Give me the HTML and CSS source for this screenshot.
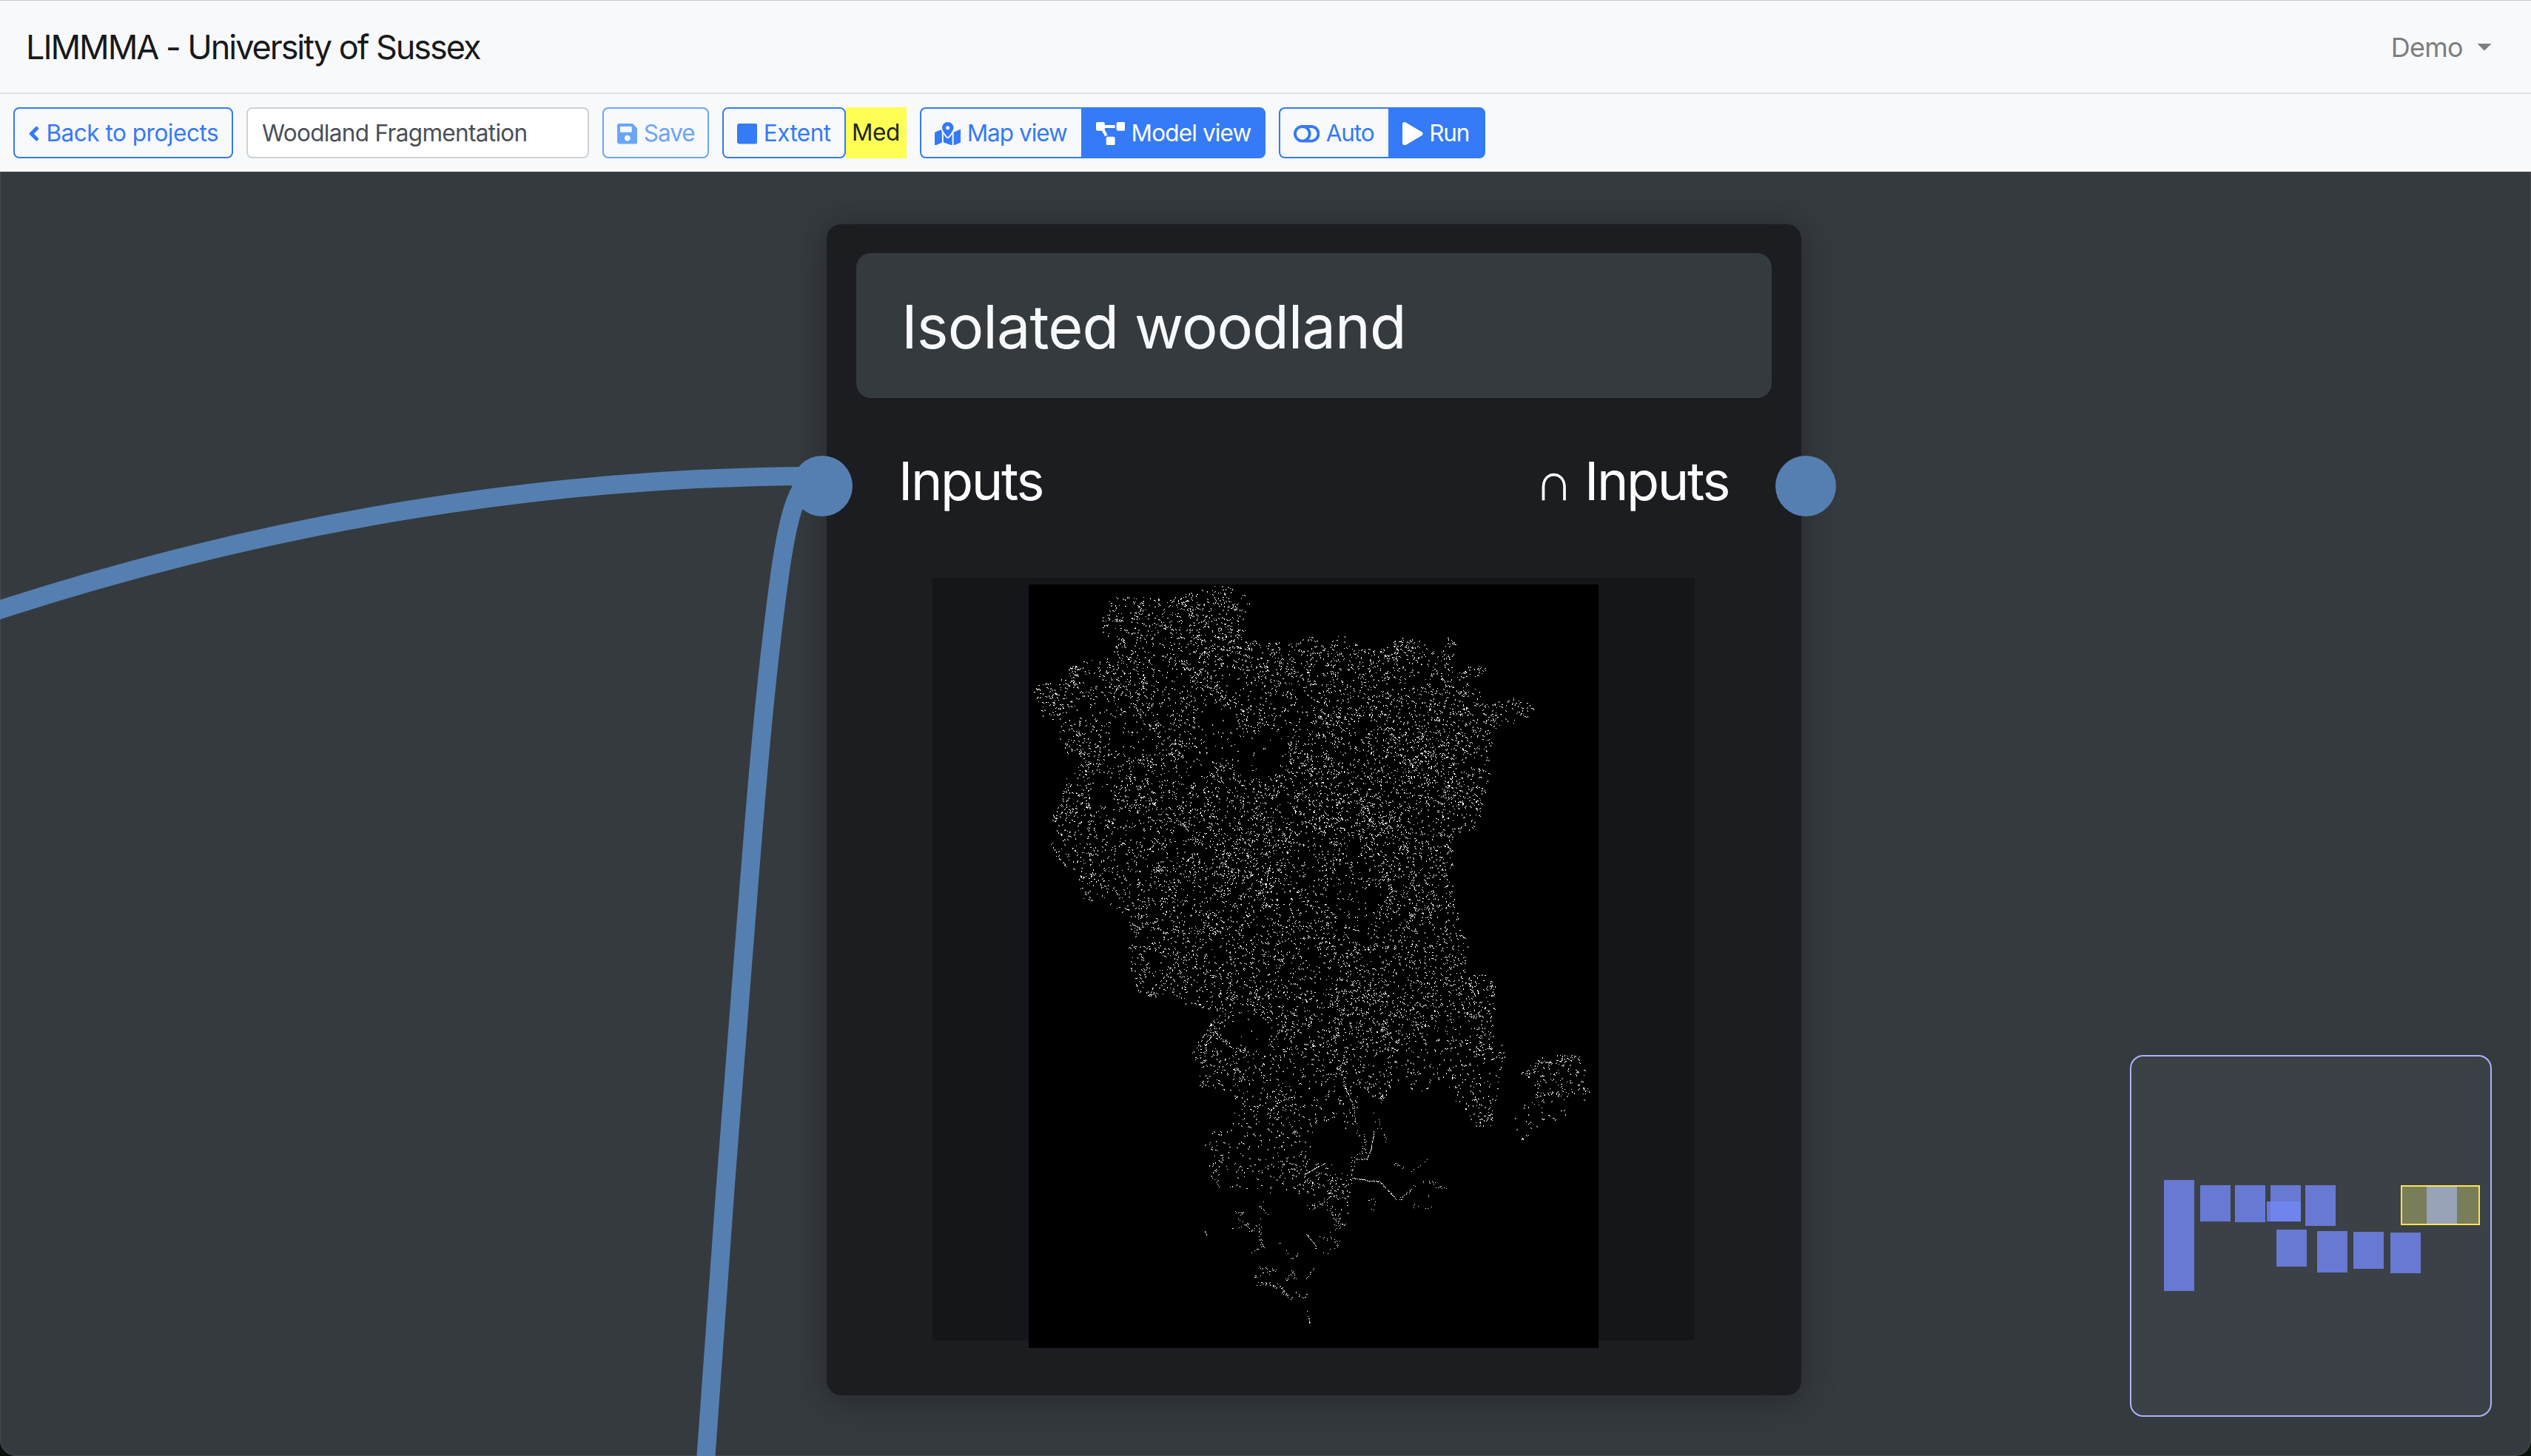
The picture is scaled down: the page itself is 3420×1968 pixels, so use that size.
FILE: index.html
```html
<!DOCTYPE html>
<html lang="en">
<head>
<meta charset="utf-8">
<title>LIMMMA - University of Sussex</title>
<link rel="stylesheet" href="styles.css">
</head>
<body>
<div class="app">
  <header class="navbar">
    <div class="brand">LIMMMA - University of Sussex</div>
    <div class="user-menu"><span>Demo</span><i class="caret"></i></div>
  </header>

  <div class="toolbar">
    <button class="btn btn-back">
      <svg class="icon" viewBox="0 0 256 512"><path d="M31.7 239l136-136c9.4-9.4 24.6-9.4 33.9 0l22.6 22.6c9.4 9.4 9.4 24.6 0 33.9L127.9 256l96.4 96.4c9.4 9.4 9.4 24.6 0 33.9L201.7 409c-9.4 9.4-24.6 9.4-33.9 0l-136-136c-9.5-9.4-9.5-24.6-.1-34z"/></svg>
      <span>Back to projects</span>
    </button>
    <div class="project-name">Woodland Fragmentation</div>
    <button class="btn btn-save">
      <svg class="icon" viewBox="0 0 448 512"><path d="M433.941 129.941l-83.882-83.882A48 48 0 0 0 316.118 32H48C21.49 32 0 53.49 0 80v352c0 26.51 21.49 48 48 48h352c26.51 0 48-21.49 48-48V163.882a48 48 0 0 0-14.059-33.941zM224 416c-35.346 0-64-28.654-64-64 0-35.346 28.654-64 64-64s64 28.654 64 64c0 35.346-28.654 64-64 64zm96-304.52V212c0 6.627-5.373 12-12 12H76c-6.627 0-12-5.373-12-12V108c0-6.627 5.373-12 12-12h228.52c3.183 0 6.235 1.264 8.485 3.515l3.48 3.48A11.996 11.996 0 0 1 320 111.48z"/></svg>
      <span>Save</span>
    </button>
    <div class="group">
      <button class="btn btn-extent">
        <svg class="icon" viewBox="0 0 448 512"><path d="M400 32H48C21.5 32 0 53.500 0 80v352c0 26.500 21.500 48 48 48h352c26.500 0 48-21.500 48-48V80c0-26.500-21.500-48-48-48z"/></svg>
        <span>Extent</span>
      </button>
      <div class="badge-med">Med</div>
    </div>
    <div class="group">
      <button class="btn btn-map first">
        <svg class="icon" viewBox="0 0 576 512"><path d="M288 0c-69.59 0-126 56.41-126 126 0 56.26 82.35 158.8 113.9 196.02 6.39 7.54 17.82 7.54 24.2 0C331.65 284.8 414 182.26 414 126 414 56.41 357.59 0 288 0zm0 168c-23.2 0-42-18.8-42-42s18.8-42 42-42 42 18.8 42 42-18.8 42-42 42zM20.12 215.95A32.006 32.006 0 0 0 0 245.66v250.32c0 11.32 11.43 19.06 21.94 14.86L160 448V214.92c-8.84-15.98-16.07-31.54-21.25-46.42L20.12 215.95zM288 359.67c-14.07 0-27.38-6.18-36.51-16.96-19.66-23.2-40.57-49.62-59.49-76.72v182l192 64V266c-18.92 27.09-39.82 53.52-59.49 76.72-9.13 10.77-22.44 16.95-36.51 16.95zm266.06-198.51L416 224v288l139.88-55.95A31.996 31.996 0 0 0 576 426.34V176.02c0-11.32-11.43-19.06-21.94-14.86z"/></svg>
        <span>Map view</span>
      </button>
      <button class="btn btn-model solid last">
        <svg class="icon" viewBox="0 0 640 512"><path d="M384 320H256c-17.67 0-32 14.33-32 32v128c0 17.67 14.33 32 32 32h128c17.67 0 32-14.33 32-32V352c0-17.67-14.33-32-32-32zM192 32c0-17.67-14.33-32-32-32H32C14.33 0 0 14.33 0 32v128c0 17.67 14.33 32 32 32h95.72l73.16 128.04C211.98 300.98 232.4 288 256 288h.28L192 175.51V128h224V64H192V32zM608 0H480c-17.67 0-32 14.33-32 32v128c0 17.67 14.33 32 32 32h128c17.67 0 32-14.33 32-32V32c0-17.67-14.33-32-32-32z"/></svg>
        <span>Model view</span>
      </button>
    </div>
    <div class="group">
      <button class="btn btn-auto first">
        <svg class="icon" viewBox="0 0 576 512"><path d="M384 64H192C85.961 64 0 149.961 0 256s85.961 192 192 192h192c106.039 0 192-85.961 192-192S490.039 64 384 64zM64 256c0-70.741 57.249-128 128-128 70.741 0 128 57.249 128 128 0 70.741-57.249 128-128 128-70.741 0-128-57.249-128-128zm320 128h-48.905c65.217-72.858 65.236-183.12 0-256H384c70.741 0 128 57.249 128 128 0 70.74-57.249 128-128 128z"/></svg>
        <span>Auto</span>
      </button>
      <button class="btn btn-run solid last">
        <svg class="icon" viewBox="0 0 448 512"><path d="M424.4 214.7L72.4 6.6C43.8-10.3 0 6.1 0 47.900V464c0 37.500 40.700 60.100 72.400 41.300l352-208c31.400-18.500 31.500-64.100 0-82.600z"/></svg>
        <span>Run</span>
      </button>
    </div>
  </div>

  <main class="workspace">
    <section class="node">
      <div class="node-title">Isolated woodland</div>
      <div class="node-ports">
        <span class="port-label">Inputs</span>
        <span class="port-label">∩ Inputs</span>
      </div>
      <div class="preview"><canvas id="raster" width="770" height="1032"></canvas></div>
    </section>
    <svg class="wires" viewBox="0 0 3420 1736">
      <g transform="translate(0 -232)">
        <path d="M-20 830.500L0 824C367 705 740 643.500 1105 643.500"/>
        <path d="M952 1996L954 1968C969.500 1745 986 1521 1004 1298C1018 1123 1030 949 1054 774C1061 725 1074 643.500 1105 643.500"/>
      </g>
    </svg>
    <i class="socket socket-in"></i>
    <i class="socket socket-out"></i>

    <aside class="minimap">
      <svg viewBox="2878 1426 489 489">
        <g class="mini-node">
          <rect x="2924" y="1595" width="41" height="150"/>
          <rect x="2973" y="1602" width="41" height="49"/>
          <rect x="3020" y="1602" width="41" height="50"/>
          <rect x="3068" y="1602" width="41" height="49"/>
          <rect x="3063" y="1624" width="46" height="27"/>
          <rect x="3115" y="1602" width="41" height="55"/>
          <rect x="3076" y="1662" width="41" height="50"/>
          <rect x="3131" y="1664" width="41" height="56"/>
          <rect x="3180" y="1665" width="41" height="50"/>
          <rect x="3230" y="1666" width="41" height="55"/>
          <rect x="3279" y="1602" width="41" height="53"/>
        </g>
        <rect class="mini-view" x="3245" y="1603" width="105" height="52"/>
      </svg>
    </aside>
  </main>
</div>
<script src="raster.js"></script>
</body>
</html>
```
FILE: styles.css
```css
* { box-sizing: border-box; }

html { background: #0a120c; }

body {
  margin: 0;
  font-family: Inter, "Liberation Sans", sans-serif;
  font-size: 31.5px;
  color: #212529;
}

.app {
  display: flex;
  flex-direction: column;
  height: 1968px;
  overflow: hidden;
}

.navbar {
  display: flex;
  justify-content: space-between;
  align-items: center;
  height: 127px;
  padding: 1px 53px 0 35px;
  background: #f8f9fb;
  border-top: 1px solid #c6c7ca;
  border-bottom: 2px solid #dee0e6;
}

.brand {
  font-size: 45px;
  letter-spacing: -2.03px;
  color: #18191a;
}

.user-menu {
  display: flex;
  align-items: center;
  gap: 19px;
  font-size: 36px;
  letter-spacing: -0.7px;
  color: #7d7e7f;
}

.caret {
  width: 20px;
  height: 10px;
  background: currentColor;
  clip-path: polygon(0 0, 100% 0, 50% 100%);
}

.toolbar {
  display: flex;
  gap: 18px;
  height: 105px;
  padding: 18px;
  background: #f8f9fb;
}

.group { display: flex; }

.btn {
  display: flex;
  align-items: center;
  gap: 8.7px;
  height: 69px;
  padding: 0 0 0 17.5px;
  border: 2px solid #357af6;
  border-radius: 8px;
  background: transparent;
  color: #357af6;
  font: inherit;
  white-space: nowrap;
}

.btn.solid { background: #357af6; color: #fff; }
.btn.first { border-right: 0; border-radius: 8px 0 0 8px; }
.btn.last { border-radius: 0 8px 8px 0; }

.btn-back { width: 297px; padding-left: 18px; letter-spacing: -0.48px; }
.btn-save { width: 144px; letter-spacing: -1px; color: #6ba5f8; border-color: #6ba5f8; }
.btn-extent { width: 167px; letter-spacing: -0.54px; }
.btn-map { width: 218px; letter-spacing: -0.99px; }
.btn-model { width: 249px; letter-spacing: -0.85px; }
.btn-auto { width: 148px; letter-spacing: -1.1px; }
.btn-run { width: 131px; padding-left: 17px; letter-spacing: -1.2px; }

.icon {
  height: 31.5px;
  margin-top: 2px;
  fill: currentColor;
}

.project-name {
  width: 463px;
  height: 69px;
  padding-left: 19px;
  border: 2px solid #ced2d6;
  border-radius: 8px;
  background: #fff;
  color: #495057;
  line-height: 66px;
  letter-spacing: -0.67px;
}

.badge-med {
  width: 82px;
  padding-left: 8px;
  background: #ffff54;
  line-height: 67px;
  letter-spacing: -0.4px;
}

.workspace {
  position: relative;
  flex: 1;
  overflow: hidden;
  background: #353a3e;
  border-radius: 0 0 22px 22px;
  box-shadow: inset 0 0 0 1px #484c50;
}

.node {
  position: absolute;
  left: 1117px;
  top: 71px;
  width: 1317px;
  height: 1583px;
  padding: 39px 40px;
  border-radius: 20px;
  background: #1c1d21;
  box-shadow: 0 5px 45px rgba(20, 20, 28, 0.45);
  color: #fff;
}

.node-title {
  height: 196px;
  padding: 5px 0 0 61px;
  border-radius: 20px;
  background: #353a3e;
  color: #f8f9fb;
  font-size: 81px;
  line-height: 191px;
  letter-spacing: -0.94px;
}

.node-ports {
  display: flex;
  justify-content: space-between;
  margin-top: 78px;
  padding: 0 58px 0 57px;
  font-size: 72px;
  line-height: 67px;
  height: 82px;
  letter-spacing: -2.4px;
}

.preview {
  display: flex;
  justify-content: center;
  width: 1030px;
  height: 1031px;
  margin: 83px auto 0 103px;
  padding-top: 9px;
  background: #15161a;
}

.preview canvas {
  flex: none;
  width: 770px;
  height: 1032px;
  background: #000;
}

.wires {
  position: absolute;
  inset: 0;
  width: 3420px;
  height: 1736px;
}

.wires path {
  fill: none;
  stroke: #557fb0;
  stroke-width: 25px;
}

.socket {
  position: absolute;
  top: 384px;
  width: 82px;
  height: 82px;
  border-radius: 50%;
  background: #557fb0;
}

.socket-in { left: 1070px; }
.socket-out { left: 2399px; }

.minimap {
  position: absolute;
  left: 2878px;
  top: 1194px;
  width: 489px;
  height: 489px;
  border-radius: 18px;
  background: #3b4147;
  box-shadow: inset 0 0 0 2px #afb2fb;
}

.minimap svg { display: block; width: 489px; height: 489px; }
.mini-node rect { fill: rgba(115, 135, 245, 0.8); }

.mini-view {
  fill: rgba(255, 251, 128, 0.32);
  stroke: #ffe54f;
  stroke-width: 2px;
}
```
FILE: raster.js
```javascript
// Sparse woodland raster: single white cells scattered inside the region outline.
const canvas = document.getElementById('raster');
const ctx = canvas.getContext('2d');
const SX = 0.5102, SY = 0.7015, OX = 20, OY = 29;

function path(points) {
  const p = new Path2D();
  points.forEach(([x, y], i) => {
    const px = (x - OX) * SX, py = (y - OY) * SY;
    i ? p.lineTo(px, py) : p.moveTo(px, py);
  });
  p.closePath();
  return p;
}

const mainland = path([[214,55],[300,50],[400,55],[470,38],[500,29],[555,30],[612,60],[590,85],[600,130],[640,140],[700,140],[780,125],[800,150],[850,120],[900,150],[980,150],[985,125],[1060,135],[1110,165],[1135,118],[1155,135],[1150,200],[1190,185],[1245,182],[1240,195],[1185,212],[1215,235],[1225,262],[1300,242],[1362,262],[1350,280],[1280,305],[1250,310],[1240,370],[1235,440],[1200,500],[1150,510],[1140,580],[1155,660],[1185,710],[1175,775],[1225,780],[1262,800],[1245,890],[1290,925],[1265,985],[1255,1070],[1205,1075],[1165,1035],[1100,985],[1060,1010],[990,985],[955,1030],[900,1000],[880,1075],[840,1080],[790,1060],[760,1100],[800,1140],[880,1160],[860,1265],[835,1265],[800,1215],[740,1205],[670,1190],[610,1195],[525,1188],[500,1165],[490,1150],[488,1100],[505,1080],[555,1075],[560,1010],[460,995],[475,970],[452,930],[500,870],[520,850],[450,845],[400,825],[310,822],[285,760],[285,670],[240,645],[160,635],[145,590],[75,545],[80,480],[120,400],[160,370],[100,350],[100,300],[55,285],[25,225],[80,215],[165,170],[220,175],[250,150],[215,130]]);
const island = path([[1320,970],[1360,945],[1415,930],[1478,938],[1522,992],[1500,1030],[1400,1070],[1350,1090],[1310,1103],[1305,1045],[1365,1010]]);

// [x, y, radius x, radius y, density factor]
const zones = [
  [630,355,70,45,0.15],[520,320,60,50,0.25],
  [600,890,60,35,0.1],[440,380,60,30,0.3],[215,440,30,50,0.15],[880,630,70,25,0.4],
  [820,1105,55,40,0.25],[530,1045,30,35,0.1],[280,320,70,35,0.4],[200,270,50,30,0.3],
  [580,1185,120,25,0.5],[1400,1050,90,40,0.5],
  [1085,380,120,110,1.6],[830,470,220,110,1.45],[480,120,200,110,1.25],[930,860,170,80,1.4],
  [150,235,60,25,1.6],[1215,860,45,80,1.5],[590,560,120,90,1.25],[310,630,50,30,1.5],
  [140,480,50,60,1.3],[1020,150,50,25,1.5],[830,1240,40,50,1.5]
];

let seed = 20117;
function rnd() {
  seed = (seed + 0x6D2B79F5) | 0;
  let t = Math.imul(seed ^ (seed >>> 15), 1 | seed);
  t = (t + Math.imul(t ^ (t >>> 7), 61 | t)) ^ t;
  return ((t ^ (t >>> 14)) >>> 0) / 4294967296;
}

// Smooth value noise for patchy clumps
const G = 90, grid = Array.from({ length: G * G }, rnd);
function noise(x, y) {
  const ix = Math.floor(x), iy = Math.floor(y), s = t => t * t * (3 - 2 * t);
  const u = s(x - ix), v = s(y - iy), g = (a, b) => grid[(b % G) * G + (a % G)];
  return (g(ix, iy) * (1 - u) + g(ix + 1, iy) * u) * (1 - v)
       + (g(ix, iy + 1) * (1 - u) + g(ix + 1, iy + 1) * u) * v;
}

ctx.fillStyle = '#fff';
for (let y = 0; y < 1032; y++) {
  for (let x = 0; x < 770; x++) {
    const r = rnd();
    if (r > 0.13) continue;
    const land = ctx.isPointInPath(mainland, x, y), isle = !land && ctx.isPointInPath(island, x, y);
    if (!land && !isle) continue;
    const dx = x / SX + OX, dy = y / SY + OY;
    let p = 0.036;
    if (isle) p = 0.024;
    else if (dy > 930) p = 0.025;
    for (const [cx, cy, rx, ry, f] of zones) {
      const d = ((dx - cx) / rx) ** 2 + ((dy - cy) / ry) ** 2;
      if (d < 1) p *= f < 1 ? f : 1 + (f - 1) * (1 - d * d);
    }
    const n = noise(x / 7, y / 7), m = noise(x / 31 + 40, y / 31 + 40);
    p *= (0.35 + 1.9 * n * n) * (0.65 + 0.7 * m);
    if (r > p) continue;
    ctx.fillRect(x, y, 1, 1);
    const k = rnd();
    if (k < 0.16) ctx.fillRect(x + 1, y, 1, 1);
    else if (k < 0.42) ctx.fillRect(x, y + 1, 1, 1);
    else if (k < 0.54) ctx.fillRect(x + 1, y + 1, 1, 1);
    else if (k < 0.66) ctx.fillRect(x - 1, y + 1, 1, 1);
    if (k < 0.06) ctx.fillRect(x + 2, y + 1, 1, 1);
  }
}

// Wooded corridors along the southern valleys: [polyline, fill rate, spread]
const corridors = [
  [[[820,455],[860,452],[875,520],[895,590],[901,660]], 0.6, 3],
  [[[901,690],[925,710],[922,770],[890,800],[890,860]], 0.6, 8],
  [[[950,685],[943,750],[930,800],[900,800]], 0.8, 2],
  [[[890,875],[930,885],[965,890],[990,930],[1010,960]], 0.8, 2],
  [[[985,970],[1015,970],[1050,930],[1065,895],[1110,890],[1125,915],[1150,916]], 0.5, 5],
  [[[1000,812],[1030,830],[1035,845]], 0.5, 6],
  [[[1050,850],[1095,803]], 0.25, 4],
  [[[925,970],[950,960],[945,1015]], 0.35, 5],
  [[[1060,960],[1060,995],[1110,993],[1095,930]], 0.3, 5],
  [[[975,670],[940,605],[990,740]], 0.1, 6],
  [[[655,620],[690,565],[730,545]], 0.6, 3],
  [[[760,860],[815,815]], 0.8, 2],
  [[[500,865],[525,910]], 0.5, 2],
  [[[565,1015],[590,1015],[575,1045],[605,1065],[560,1083]], 0.35, 4],
  [[[600,1060],[610,1090],[635,1060],[638,1140],[645,1160]], 0.55, 5],
  [[[645,1155],[612,1175],[615,1200],[640,1242]], 0.25, 3],
  [[[640,1242],[680,1250],[615,1275]], 0.4, 6],
  [[[630,1305],[660,1305],[695,1320],[700,1340],[725,1365]], 0.9, 6],
  [[[735,1340],[760,1365],[765,1330]], 0.4, 5],
  [[[705,1300],[715,1280],[725,1250],[735,1290]], 0.5, 5],
  [[[760,1295],[785,1240]], 0.4, 2],
  [[[765,1395],[765,1430],[775,1467]], 0.45, 3],
  [[[690,1140],[712,1170],[725,1212],[745,1170]], 0.2, 5],
  [[[765,1105],[785,1140],[790,1165]], 0.6, 3],
  [[[800,1120],[835,1120],[855,1140],[825,1170],[805,1190]], 0.4, 6],
  [[[820,1000],[845,1030],[860,1070],[828,1085]], 0.7, 10],
  [[[765,990],[800,990],[820,960]], 0.8, 9],
  [[[483,1090],[493,1112]], 0.5, 2],
  [[[665,940],[635,990],[660,1023],[635,1040]], 0.2, 4],
  [[[480,425],[485,350],[505,250],[520,300],[560,350],[600,350]], 0.5, 5],
  [[[1355,450],[1390,440],[1400,405],[1440,410]], 0.7, 5],
  [[[1395,545],[1430,535],[1470,520],[1455,480]], 0.7, 6],
  [[[1460,400],[1490,382],[1515,385]], 0.6, 5]
];
for (const [pts, rate, spread] of corridors) {
  for (let i = 0; i + 1 < pts.length; i++) {
    const [ax, ay] = pts[i], [bx, by] = pts[i + 1];
    const x0 = ax / 2.036, y0 = 510 + ay / 3, x1 = bx / 2.036, y1 = 510 + by / 3;
    const n = Math.hypot(x1 - x0, y1 - y0);
    for (let t = 0; t < n; t++) {
      if (rnd() > rate) continue;
      const x = x0 + (x1 - x0) * t / n + (rnd() - 0.5) * (spread - 1);
      const y = y0 + (y1 - y0) * t / n + (rnd() - 0.5) * (spread - 1);
      ctx.fillRect(Math.round(x), Math.round(y), 1, 1);
    }
  }
}
```
